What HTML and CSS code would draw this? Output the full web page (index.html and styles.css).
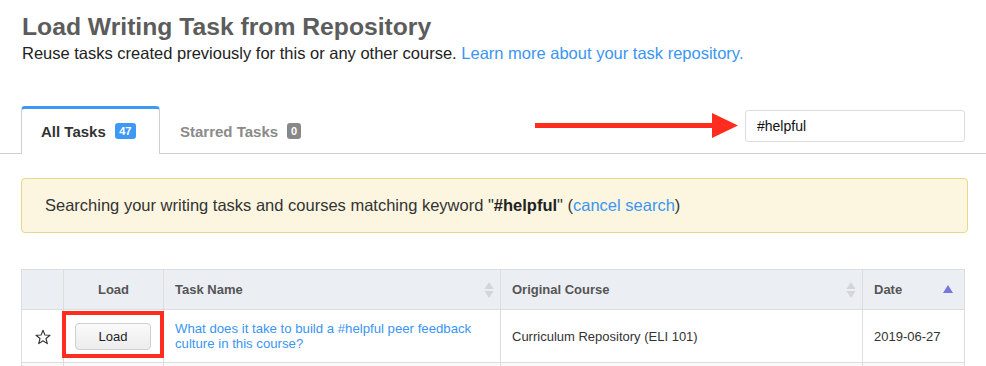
FILE: index.html
```html
<!DOCTYPE html>
<html lang="en">
<head>
<meta charset="utf-8">
<title>Load Writing Task from Repository</title>
<link rel="stylesheet" href="styles.css">
</head>
<body>
  <header class="intro">
    <h1 class="title">Load Writing Task from Repository</h1>
    <p class="lead">Reuse tasks created previously for this or any other course. <a class="link" href="#">Learn more about your task repository.</a></p>
  </header>

  <div class="tabbar">
    <ul class="tabs">
      <li class="tab tab-active">All Tasks <span class="badge badge-blue">47</span></li>
      <li class="tab">Starred Tasks <span class="badge badge-gray">0</span></li>
    </ul>
    <div class="search">
      <input class="search-input" type="text" value="#helpful">
    </div>
    <svg class="arrow" width="203" height="25" viewBox="0 0 203 25" aria-hidden="true">
      <rect x="0" y="10" width="180" height="5" fill="#ff2c1f"/>
      <polygon points="177,0 203,12.5 177,25" fill="#ff2c1f"/>
    </svg>
  </div>

  <main class="content">
    <div class="alert">
      Searching your writing tasks and courses matching keyword "<strong>#helpful</strong>" (<a class="link" href="#">cancel search</a>)
    </div>

    <table class="grid">
      <colgroup>
        <col class="c-star"><col class="c-load"><col class="c-name"><col class="c-course"><col class="c-date">
      </colgroup>
      <thead>
        <tr>
          <th></th>
          <th class="th-center">Load</th>
          <th><div class="th-inner"><span>Task Name</span>
            <svg class="sort" width="10" height="18" viewBox="0 0 10 18"><polygon points="5,1 9.5,8 0.5,8" fill="#d3d5d8"/><polygon points="0.5,10 9.5,10 5,17" fill="#d3d5d8"/></svg></div></th>
          <th><div class="th-inner"><span>Original Course</span>
            <svg class="sort" width="10" height="18" viewBox="0 0 10 18"><polygon points="5,1 9.5,8 0.5,8" fill="#d3d5d8"/><polygon points="0.5,10 9.5,10 5,17" fill="#d3d5d8"/></svg></div></th>
          <th><div class="th-inner"><span>Date</span>
            <svg class="sort-asc" width="10" height="8" viewBox="0 0 10 8"><polygon points="5,0 10,8 0,8" fill="#7577de"/></svg></div></th>
        </tr>
      </thead>
      <tbody>
        <tr>
          <td class="td-center">
            <svg class="star" width="16" height="16" viewBox="0 0 16 16"><polygon points="8,1.2 9.9,6 15,6.3 11,9.5 12.3,14.6 8,11.8 3.7,14.6 5,9.5 1,6.3 6.1,6" fill="none" stroke="#333" stroke-width="1.1" stroke-linejoin="round"/></svg>
          </td>
          <td class="td-center td-load">
            <button class="btn" type="button">Load</button>
            <span class="callout" aria-hidden="true"></span>
          </td>
          <td><a class="link" href="#">What does it take to build a #helpful peer feedback culture in this course?</a></td>
          <td>Curriculum Repository (ELI 101)</td>
          <td>2019-06-27</td>
        </tr>
        <tr class="row-alt">
          <td></td><td></td><td></td><td></td><td></td>
        </tr>
      </tbody>
    </table>
  </main>
</body>
</html>
```

FILE: styles.css
```css
* { box-sizing: border-box; }

html, body {
  margin: 0;
  padding: 0;
  background: #fff;
}

body {
  font-family: "Liberation Sans", Arial, Helvetica, sans-serif;
  color: #222;
  width: 986px;
  overflow: hidden;
}

.intro {
  padding: 13px 22px 0;
}

.title {
  margin: 0;
  font-size: 24.7px;
  line-height: 28px;
  font-weight: bold;
  color: #5c5c5c;
}

.lead {
  margin: 2px 0 0;
  font-size: 16.5px;
  line-height: 20px;
  color: #222;
}

.link {
  color: #3a95f3;
  text-decoration: none;
}

/* Tabs */
.tabbar {
  position: relative;
  margin-top: 43px;
  height: 48px;
  display: flex;
  justify-content: space-between;
  align-items: flex-start;
  border-bottom: 1px solid #cfcfcf;
  padding-left: 21px;
}

.tabs {
  list-style: none;
  margin: 0;
  padding: 0;
  display: flex;
  align-items: stretch;
  height: 48px;
}

.tab {
  display: flex;
  align-items: center;
  gap: 9px;
  padding: 2px 20px 0 20px;
  font-size: 15px;
  font-weight: bold;
  color: #8a8a8a;
  height: 48px;
}

.tab-active {
  color: #333;
  background: #fff;
  border: 1px solid #cfcfcf;
  border-top: 3px solid #3d99f5;
  border-bottom: none;
  border-radius: 4px 4px 0 0;
  padding: 0 22px 1px 19px;
  width: 139px;
  height: 48px;
  position: relative;
  z-index: 1;
}

.badge {
  display: inline-flex;
  align-items: center;
  justify-content: center;
  height: 16px;
  min-width: 14px;
  padding: 0 3px;
  border-radius: 3px;
  font-size: 11px;
  font-weight: bold;
  color: #fff;
}

.badge-blue {
  background: #3d99f5;
  min-width: 21px;
}

.badge-gray {
  background: #888;
}

.search {
  margin: 4px 21px 0 0;
}

.search-input {
  display: block;
  width: 220px;
  height: 32px;
  border: 1px solid #dcdcdc;
  border-radius: 3px;
  padding: 0 11px;
  font-family: "Liberation Sans", Arial, Helvetica, sans-serif;
  font-size: 14px;
  color: #111;
  background: #fff;
  outline: none;
}

.arrow {
  position: absolute;
  left: 535px;
  top: 7px;
}

/* Content */
.content {
  padding: 24px 0 0 21px;
}

.alert {
  width: 947px;
  height: 55px;
  display: flex;
  align-items: center;
  padding: 0 23px;
  background: #fcf6e0;
  border: 1px solid #e7d88e;
  border-radius: 4px;
  font-size: 16.5px;
  color: #333;
}

.alert strong {
  color: #222;
}

/* Table */
.grid {
  margin-top: 36px;
  width: 943px;
  border-collapse: collapse;
  table-layout: fixed;
  font-size: 13px;
  color: #333;
}

.c-star { width: 42px; }
.c-load { width: 100px; }
.c-name { width: 337px; }
.c-course { width: 362px; }
.c-date { width: 102px; }

.grid th,
.grid td {
  border: 1px solid #dddddd;
  padding: 0 11px;
  text-align: left;
  vertical-align: middle;
}

.grid thead th {
  height: 40px;
  background: #ebeef3;
  font-weight: bold;
  color: #555;
  font-size: 13px;
}

.grid thead th:nth-child(3),
.grid thead th:nth-child(4) {
  padding-right: 6px;
}

.grid thead th:nth-child(5) {
  padding-right: 11px;
}

.th-inner {
  display: flex;
  align-items: center;
  justify-content: space-between;
}

.sort {
  display: block;
}

.sort-asc {
  display: block;
  margin-top: -2px;
}

.th-center,
.td-center {
  text-align: center !important;
}

.grid tbody td {
  height: 53px;
  line-height: 15px;
}

.grid tbody td:nth-child(3) a {
  font-size: 13.2px;
}

.grid tbody td:nth-child(1) {
  padding: 0;
}

.star {
  display: block;
  margin: 1px auto 0 13px;
}

.td-load {
  position: relative;
  padding: 0 !important;
}

.btn {
  width: 76px;
  height: 27px;
  margin-top: 0;
  margin-left: -1px;
  border: 1px solid #cfcfcf;
  border-radius: 4px;
  background: linear-gradient(#fafafa, #ececec);
  font-family: "Liberation Sans", Arial, Helvetica, sans-serif;
  font-size: 13px;
  color: #222;
  padding: 0;
}

.callout {
  position: absolute;
  left: -2px;
  right: -1px;
  top: 1px;
  bottom: 4px;
  border: 4px solid #ff2c1f;
  pointer-events: none;
}

.row-alt td {
  background: #f9f9f9;
}
```
